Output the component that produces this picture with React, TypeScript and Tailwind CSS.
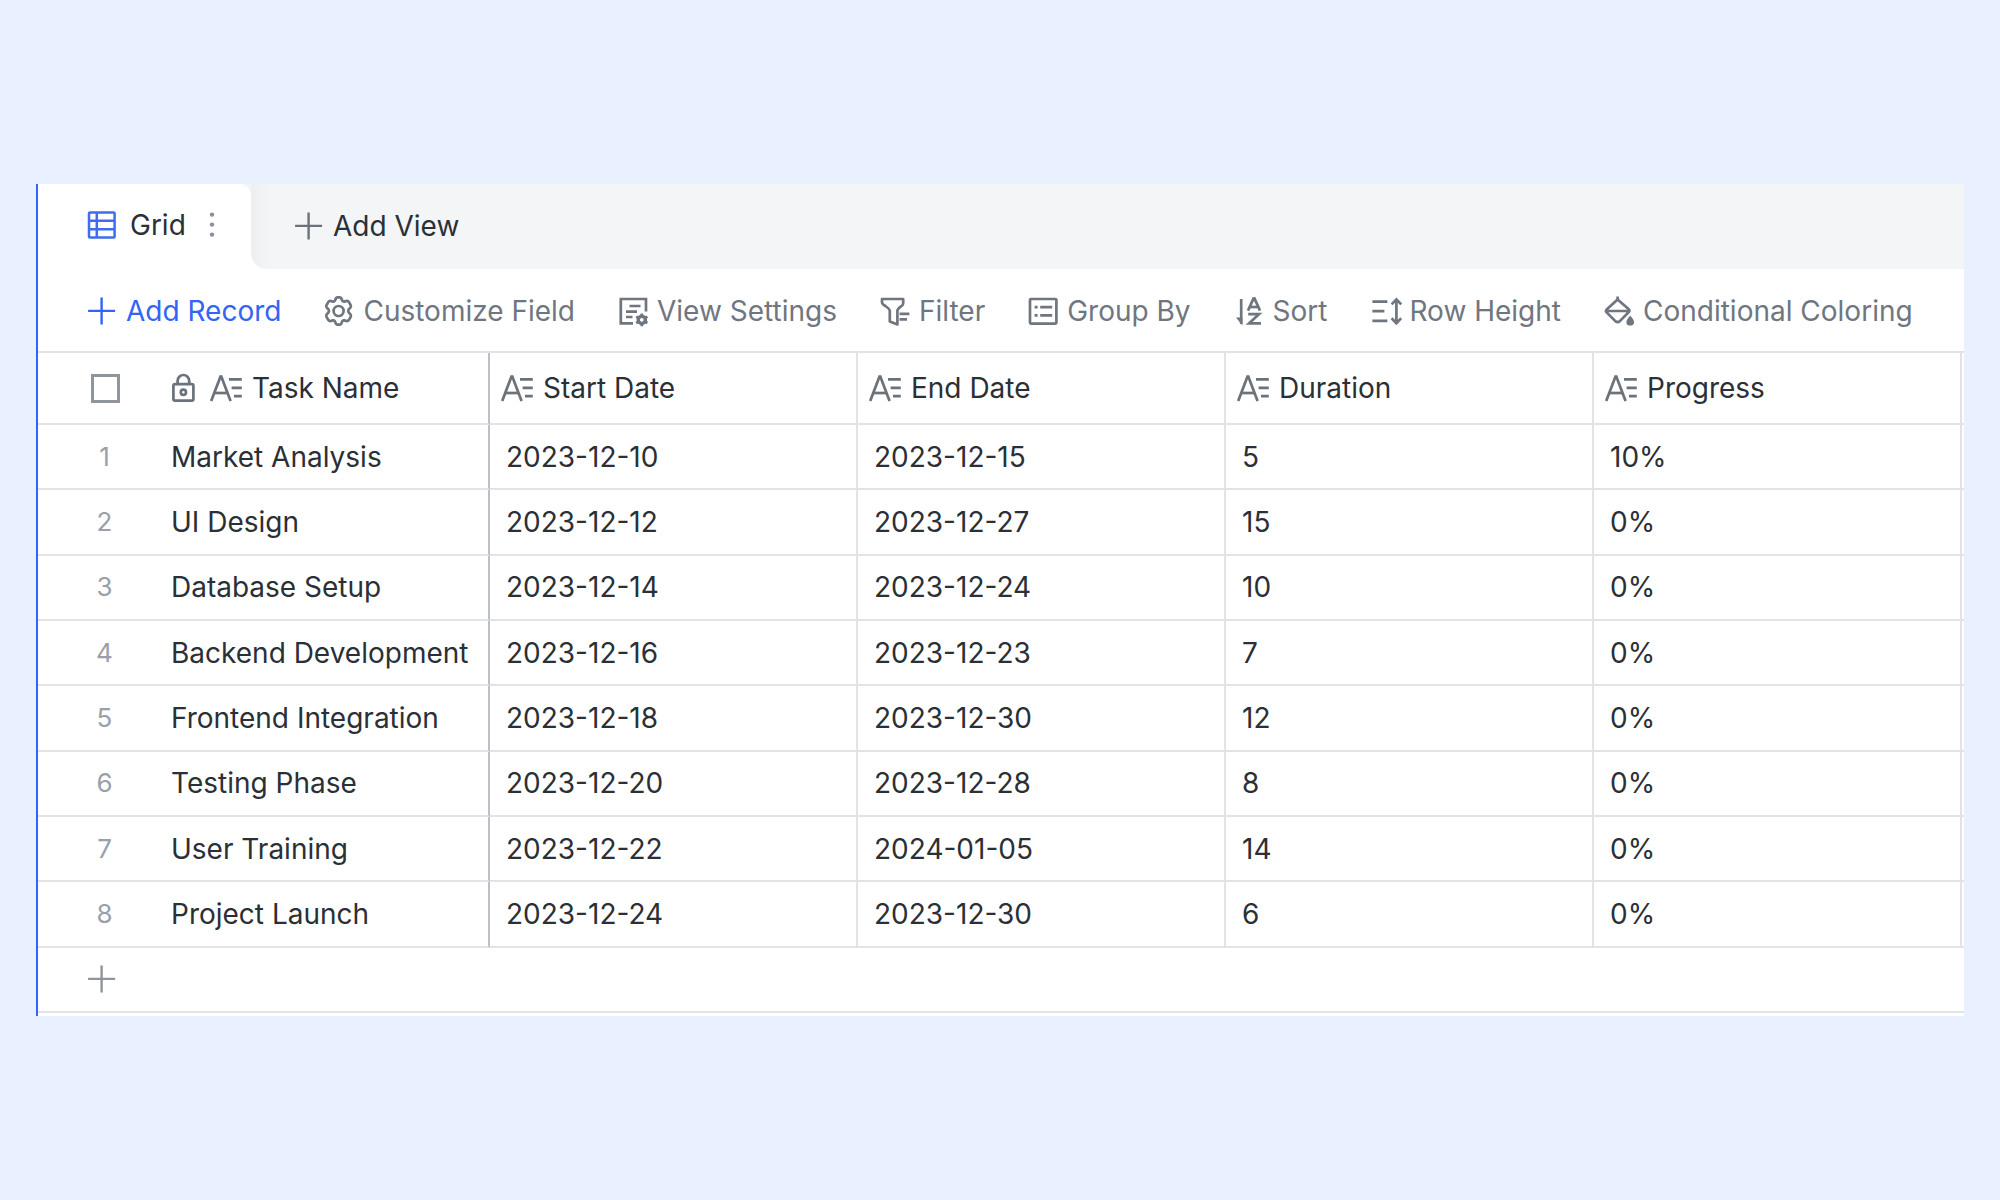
import type { ReactNode } from "react";

type Task = {
  name: string;
  start: string;
  end: string;
  duration: number;
  progress: string;
};

const tasks: Task[] = [
  { name: "Market Analysis", start: "2023-12-10", end: "2023-12-15", duration: 5, progress: "10%" },
  { name: "UI Design", start: "2023-12-12", end: "2023-12-27", duration: 15, progress: "0%" },
  { name: "Database Setup", start: "2023-12-14", end: "2023-12-24", duration: 10, progress: "0%" },
  { name: "Backend Development", start: "2023-12-16", end: "2023-12-23", duration: 7, progress: "0%" },
  { name: "Frontend Integration", start: "2023-12-18", end: "2023-12-30", duration: 12, progress: "0%" },
  { name: "Testing Phase", start: "2023-12-20", end: "2023-12-28", duration: 8, progress: "0%" },
  { name: "User Training", start: "2023-12-22", end: "2024-01-05", duration: 14, progress: "0%" },
  { name: "Project Launch", start: "2023-12-24", end: "2023-12-30", duration: 6, progress: "0%" },
];

const columns = ["Start Date", "End Date", "Duration", "Progress"];

/* ── Icons, all on a 32px box ── */
function Icon({ children, width = 2.7 }: { children: ReactNode; width?: number }) {
  return (
    <svg
      viewBox="0 0 32 32"
      className="size-8 shrink-0"
      fill="none"
      stroke="currentColor"
      strokeWidth={width}
      aria-hidden="true"
    >
      {children}
    </svg>
  );
}

const PlusIcon = () => (
  <Icon width={2.4}>
    <path d="M15.6 2.4v27M2.1 15.9h27" />
  </Icon>
);

const GridIcon = () => (
  <Icon width={2.5}>
    <rect x="3" y="3.4" width="25.6" height="25" rx="1" />
    <path d="M10.8 3.4v25M3 11.8h25.6M3 20.2h25.6" />
  </Icon>
);

const GearIcon = () => (
  <Icon>
    <path
      strokeLinejoin="round"
      d="M12.3 4.9Q12.8 2.3 14.6 2.3H16.6Q18.4 2.3 18.9 4.9Q19.4 7 21.4 6.6L23.2 6Q25 5.6 26 7.2L27.8 10.4Q28.4 12 27 13.2Q25.2 14.4 25.2 16Q25.2 17.6 27 18.8Q28.4 20 27.8 21.6L26 24.8Q25 26.4 23.2 26L21.4 25.4Q19.4 25 18.9 27.1Q18.4 29.7 16.6 29.7H14.6Q12.8 29.7 12.3 27.1Q11.8 25 9.8 25.4L8 26Q6.2 26.4 5.2 24.8L3.4 21.6Q2.8 20 4.2 18.8Q6 17.6 6 16Q6 14.4 4.2 13.2Q2.8 12 3.4 10.4L5.2 7.2Q6.2 5.6 8 6L9.8 6.6Q11.8 7 12.3 4.9Z"
    />
    <circle cx="15.6" cy="16" r="5" />
  </Icon>
);

const ViewSettingsIcon = () => (
  <Icon>
    <path d="M16 28.4H3.8V4H29V16.4M12.5 11H23.5M9 16.6H20M9 22H15.5" />
    <circle cx="24.8" cy="24.8" r="3.6" strokeWidth="3.4" />
    <path d="M24.8 18.4v2M24.8 29.2v2M19.2 21.6l1.8 1M28.6 27l1.8 1M19.2 28l1.8-1M28.6 22.6l1.8-1" />
  </Icon>
);

const FilterIcon = () => (
  <Icon>
    <path
      strokeLinejoin="round"
      d="M3 4H24.2V8.6Q24 10 22 11.4Q18.4 14 18.4 16V29.4L10.8 26.6V16Q10.8 14 6.4 11Q3 8.8 3 7.4Z"
    />
    <path d="M20.6 18.8H30.4M20.6 24.4H28" />
  </Icon>
);

const GroupIcon = () => (
  <Icon>
    <rect x="3" y="4" width="26.4" height="24.6" rx="1" />
    <path d="M7.6 12.2h3M13.2 12.2h12M7.6 20.4h3M13.2 20.4h12" />
  </Icon>
);

const SortIcon = () => (
  <Icon>
    <path d="M8.2 4V29" />
    <path d="M3 22.4H9.4V30.4Z" fill="currentColor" stroke="none" />
    <line x1="15" y1="15.6" x2="21" y2="2.4" />
    <line x1="21" y1="2.4" x2="27" y2="15.6" />
    <line x1="16.6" y1="12" x2="25.4" y2="12" />
    <polyline points="15.2,19.2 26,19.2 16,28.4 28,28.4" />
  </Icon>
);

const RowHeightIcon = () => (
  <Icon>
    <path d="M2.4 6.6h15M2.4 16.2h12M2.4 25.8h15" />
    <path d="M26.4 4.4V28.2M21.6 9.4L26.4 4.4L31.2 9.4M21.6 23.2L26.4 28.2L31.2 23.2" />
  </Icon>
);

const PaintIcon = () => (
  <Icon>
    <path
      strokeLinejoin="round"
      d="M14.6 1.6V4.4M14.6 4.4L25.8 14.2Q27 15.6 25.8 17L16.6 26.4Q14.6 28 12.6 26.4L3.6 17.4Q2.2 16 3.6 14.6ZM3 16H26.4"
    />
    <path d="M27.2 20.6Q31 25 31 27.2A3.8 3.4 0 0 1 23.4 27.2Q23.4 25 27.2 20.6Z" fill="currentColor" stroke="none" />
  </Icon>
);

const TextFieldIcon = () => (
  <Icon>
    <line x1="1.2" y1="29" x2="10.9" y2="3.4" />
    <line x1="10.9" y1="3.4" x2="20.6" y2="29" />
    <line x1="4.6" y1="21" x2="17.4" y2="21" />
    <path d="M19 7.4H31.8M21.6 15.8H31.8M24 24.2H31.8" />
  </Icon>
);

const LockIcon = () => (
  <Icon>
    <rect x="2.4" y="12.2" width="20" height="16.4" rx="1.6" />
    <path d="M6.6 12.2V8.8A5.8 5.8 0 0 1 18.2 8.8V12.2" />
    <circle cx="12.4" cy="20.2" r="2.6" />
  </Icon>
);

const tools = [
  { label: "Customize Field", icon: <GearIcon /> },
  { label: "View Settings", icon: <ViewSettingsIcon /> },
  { label: "Filter", icon: <FilterIcon /> },
  { label: "Group By", icon: <GroupIcon /> },
  { label: "Sort", icon: <SortIcon /> },
  { label: "Row Height", icon: <RowHeightIcon /> },
  { label: "Conditional Coloring", icon: <PaintIcon /> },
];

function ViewTabs() {
  return (
    <div className="flex h-[85px]">
      {/* gray shows behind the top corner only */}
      <div className="bg-linear-to-b from-[#f4f5f7] from-50% to-white to-50%">
        <div className="flex h-full w-[213px] items-center rounded-tr-xl bg-white pb-1 pl-12">
          <button className="flex items-center gap-3 text-[#2b2f36]">
            <span className="text-[#3f6cf0]">
              <GridIcon />
            </span>
            Grid
          </button>
          <button aria-label="View options" className="ml-3 text-[#8a8fa0]">
            <svg viewBox="0 0 32 32" className="size-8" fill="currentColor" aria-hidden="true">
              <circle cx="14" cy="5.6" r="2.2" />
              <circle cx="14" cy="15.6" r="2.2" />
              <circle cx="14" cy="25.6" r="2.2" />
            </svg>
          </button>
        </div>
      </div>
      <div className="flex flex-1 items-center rounded-bl-2xl bg-[linear-gradient(to_right,#edeef0,#f4f5f7_18px)] pb-0.5 pl-[42px]">
        <button className="flex items-center gap-2 text-[#2b2f36]">
          <span className="text-[#6b727b]">
            <PlusIcon />
          </span>
          Add View
        </button>
      </div>
    </div>
  );
}

function Toolbar() {
  return (
    <div className="flex h-[82px] items-center gap-[42px] overflow-hidden pt-0.5 pl-12 whitespace-nowrap text-[#6f767f]">
      <button className="flex items-center gap-2 text-[#3364f5]">
        <PlusIcon />
        Add Record
      </button>
      {tools.map((tool) => (
        <button key={tool.label} className="flex items-center gap-2">
          {tool.icon}
          {tool.label}
        </button>
      ))}
    </div>
  );
}

function TaskTable() {
  const line = "border-b-2 border-[#e2e3e5]";
  const cell = "border-r-2 border-b-2 border-[#e2e3e5] pl-4";

  return (
    <table className="h-[662px] w-full table-fixed border-separate border-spacing-0 border-t-2 border-[#e2e3e5] text-left whitespace-nowrap">
      <colgroup>
        <col className="w-[133px]" />
        <col className="w-[319px]" />
        <col />
        <col />
        <col />
        <col />
        <col className="w-[2px]" />
      </colgroup>
      <thead>
        <tr className="h-[72px]">
          <th className={`${line} pl-[53px]`}>
            <input
              type="checkbox"
              aria-label="Select all records"
              className="block size-[29px] appearance-none border-3 border-[#8f959d]"
            />
          </th>
          <th className="border-r-2 border-b-2 border-r-[#bcbfc6] border-b-[#e2e3e5] font-normal">
            <div className="flex items-center text-[#6b727b]">
              <LockIcon />
              <span className="ml-[7px] flex items-center gap-2.5">
                <TextFieldIcon />
                <span className="text-[#2b2f36]">Task Name</span>
              </span>
            </div>
          </th>
          {columns.map((column) => (
            <th key={column} className="border-r-2 border-b-2 border-[#e2e3e5] pl-[11px] font-normal">
              <div className="flex items-center gap-2.5 text-[#6b727b]">
                <TextFieldIcon />
                <span className="text-[#2b2f36]">{column}</span>
              </div>
            </th>
          ))}
          <td className={line} />
        </tr>
      </thead>
      <tbody>
        {tasks.map((task, index) => (
          <tr key={task.name} className="h-[65px]">
            <td className={`${line} text-center text-[26px] leading-8 text-[#9a9fa9]`}>{index + 1}</td>
            <td className="border-r-2 border-b-2 border-r-[#bcbfc6] border-b-[#e2e3e5]">{task.name}</td>
            <td className={cell}>{task.start}</td>
            <td className={cell}>{task.end}</td>
            <td className={cell}>{task.duration}</td>
            <td className={cell}>{task.progress}</td>
            <td className={line} />
          </tr>
        ))}
        <tr className="h-[65px]">
          <td colSpan={7} className={`${line} pl-12`}>
            <button aria-label="Add record" className="block text-[#8f949d]">
              <PlusIcon />
            </button>
          </td>
        </tr>
      </tbody>
    </table>
  );
}

export default function App() {
  return (
    <div className="flex min-h-screen items-center bg-[#e9f0ff] px-9 font-['Inter',sans-serif] text-[28px] leading-9 text-[#2b2f36]">
      <main className="w-full border-l-2 border-[#3364f5] bg-white pb-[3px]">
        <ViewTabs />
        <Toolbar />
        <TaskTable />
      </main>
    </div>
  );
}
